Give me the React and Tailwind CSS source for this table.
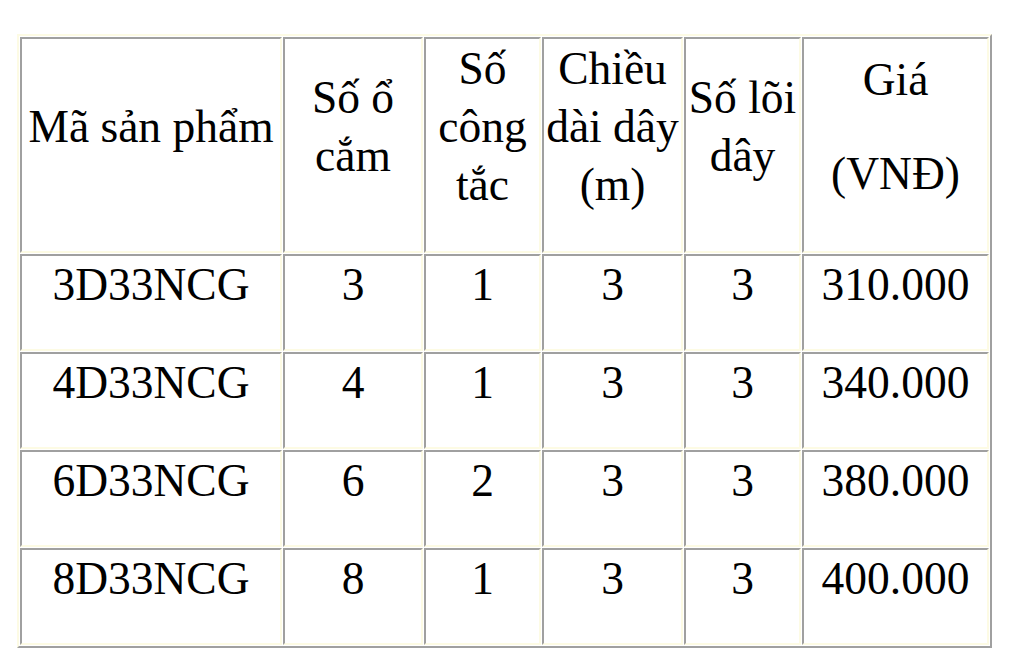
import React from 'react';

const headers = [
    { lines: ['Mã sản phẩm'], w: 'w-[262px]' },
    { lines: ['Số ổ cắm'], w: 'w-[140px]' },
    { lines: ['Số công tắc'], w: 'w-[117px]' },
    { lines: ['Chiều dài dây (m)'], w: 'w-[141px]' },
    { lines: ['Số lõi dây'], w: 'w-[117px]' },
    { lines: ['Giá', '(VNĐ)'], w: 'w-[187px]' },
];

const rows = [
    ['3D33NCG', '3', '1', '3', '3', '310.000'],
    ['4D33NCG', '4', '1', '3', '3', '340.000'],
    ['6D33NCG', '6', '2', '3', '3', '380.000'],
    ['8D33NCG', '8', '1', '3', '3', '400.000'],
];

// inset look: dark top/left, light bottom/right
const cellBorder = 'border-2 border-t-[#a0a0a0] border-l-[#a0a0a0] border-r-[#fdfbe4] border-b-[#fdfbe4] p-0 text-center align-middle font-normal';

const App = () => {
    return (
        <div className="min-h-screen bg-white text-black font-['Liberation_Serif','Times_New_Roman',serif] text-[45.5px] leading-[58px]">
            <div className="pt-[34px] pl-[17px]">
                <table className="table-fixed w-[975px] border-separate border-spacing-[1px] border-2 border-t-[#fdfbe4] border-l-[#fdfbe4] border-r-[#a0a0a0] border-b-[#a0a0a0]">
                    <thead>
                        <tr>
                            {headers.map((h, i) => (
                                <th key={i} className={`${cellBorder} ${h.w} h-[216px]`}>
                                    {h.lines.map((l, j) => (
                                        <p key={j} className="mb-[36px]">{l}</p>
                                    ))}
                                </th>
                            ))}
                        </tr>
                    </thead>
                    <tbody>
                        {rows.map((r, i) => (
                            <tr key={i}>
                                {r.map((c, j) => (
                                    <td key={j} className={`${cellBorder} h-[96px]`}>
                                        <p className="mb-[35px]">{c}</p>
                                    </td>
                                ))}
                            </tr>
                        ))}
                    </tbody>
                </table>
            </div>
        </div>
    );
};

export default App;
